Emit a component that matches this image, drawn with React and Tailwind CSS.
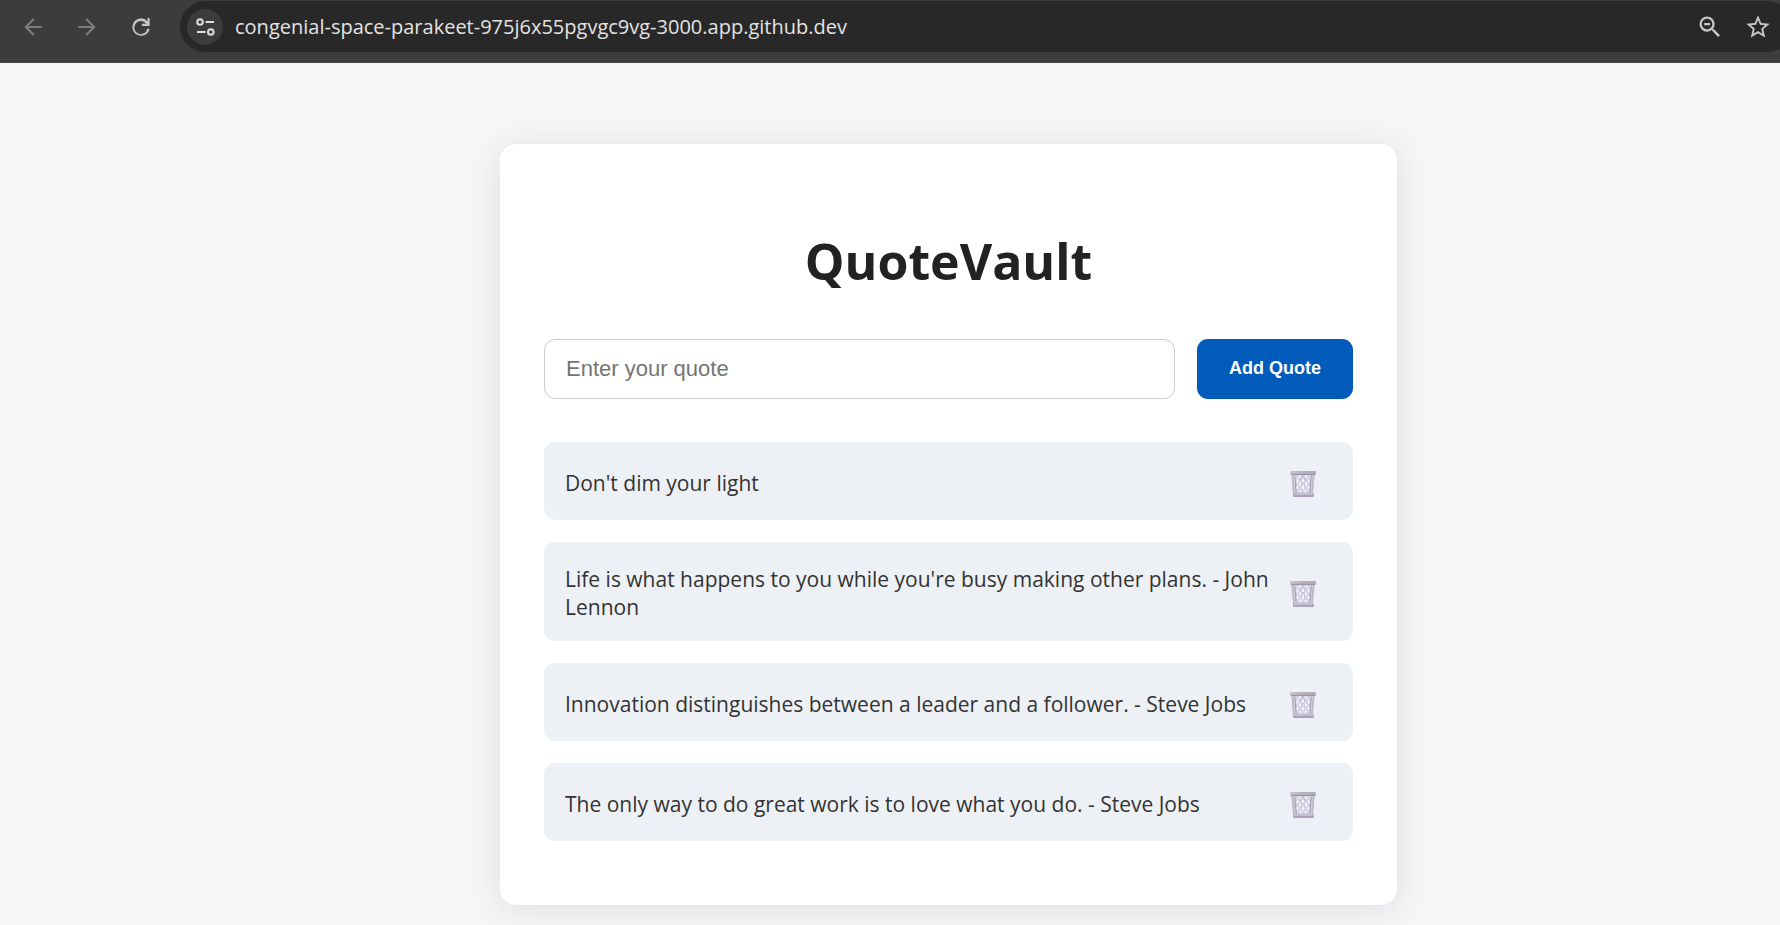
import { useId, useState } from 'react';

const initialQuotes = [
  "Don't dim your light",
  "Life is what happens to you while you're busy making other plans. - John Lennon",
  'Innovation distinguishes between a leader and a follower. - Steve Jobs',
  'The only way to do great work is to love what you do. - Steve Jobs',
];

function BackIcon() {
  return (
    <svg viewBox="0 0 24 24" className="size-[26px] fill-current" aria-hidden="true">
      <path d="M20 11H7.83l5.59-5.59L12 4l-8 8 8 8 1.41-1.41L7.83 13H20v-2z" />
    </svg>
  );
}

function ForwardIcon() {
  return (
    <svg viewBox="0 0 24 24" className="size-[26px] fill-current" aria-hidden="true">
      <path d="M12 4l-1.41 1.41L16.17 11H4v2h12.17l-5.58 5.59L12 20l8-8z" />
    </svg>
  );
}

function ReloadIcon() {
  return (
    <svg viewBox="0 0 24 24" className="size-[26px] fill-current" aria-hidden="true">
      <path d="M18 6.700V3.800h2V11h-7.200V9h3.900A6 6 0 1 0 17.800 13.500h2.100A8 8 0 1 1 18 6.700z" />
    </svg>
  );
}

function SiteSettingsIcon() {
  return (
    <svg viewBox="0 0 20 18" className="h-[18px] w-5 fill-none stroke-current stroke-2" aria-hidden="true">
      <circle cx="5" cy="4" r="2.8" />
      <path d="M10.5 4H19M2 14h8.500" />
      <circle cx="15.800" cy="14" r="2.800" />
    </svg>
  );
}

function ZoomOutIcon() {
  return (
    <svg viewBox="0 0 24 24" className="size-[28px] fill-current" aria-hidden="true">
      <path d="M15.500 14h-.79l-.28-.27A6.47 6.47 0 0 0 16 9.500 6.500 6.500 0 1 0 9.500 16c1.610 0 3.090-.59 4.230-1.570l.27.28v.79l5 4.990L20.490 19l-4.990-5zm-6 0C7.010 14 5 11.990 5 9.500S7.010 5 9.500 5 14 7.010 14 9.500 11.990 14 9.500 14zM7 8.600h5v1.800H7z" />
    </svg>
  );
}

function StarIcon() {
  return (
    <svg viewBox="0 0 24 24" className="size-[28px] fill-current" aria-hidden="true">
      <path d="M22 9.240l-7.190-.62L12 2 9.190 8.630 2 9.240l5.460 4.730L5.820 21 12 17.270 18.180 21l-1.630-7.030L22 9.240zM12 15.400l-3.760 2.270 1-4.280-3.320-2.880 4.380-.38L12 6.100l1.710 4.040 4.380.38-3.320 2.880 1 4.280L12 15.400z" />
    </svg>
  );
}

function TrashIcon() {
  const id = useId();
  return (
    <svg viewBox="0 0 26 26" className="size-[26px]" aria-hidden="true">
      <defs>
        <linearGradient id={id} x1="0" x2="1" y1="0" y2="0">
          <stop offset="0" stopColor="#c6c5ca" />
          <stop offset="0.5" stopColor="#b6b3bd" />
          <stop offset="1" stopColor="#b0acb9" />
        </linearGradient>
      </defs>
      <path d="M1.500 3h23l-1.700 20H3.200z" fill="#dad8e6" />
      <path
        d="M7 4l13 15M12 4l9 11M5.500 8l12.500 14.500M6 14l7 8.500M19 4 6 19M14 4 5.500 14M20.500 8 8 22.500M20 14l-7 8.500"
        fill="none"
        stroke="#c0bbd2"
        strokeWidth="1"
      />
      <path
        d="M9.500 4.800v2M16.500 4.800v2M7.500 8.500v3M13 8v3M18.500 8.500v3M10 11.500v3M16 11.500v3M7.500 15v3M13 15v3M18.500 15v3M10.500 18.500v2.500M15.500 18.500v2.500"
        fill="none"
        stroke="#fbfbff"
        strokeWidth="1.700"
      />
      <path d="M2.300 3.500 4 23M23.700 3.500 22 23" stroke="#bebac8" strokeWidth="1.900" />
      <path d="M4.700 4.500 6.200 22M21.300 4.500 19.800 22" stroke="#9f98ae" strokeWidth="1" />
      <rect x="0" y="0" width="26" height="3.800" rx="1" fill={`url(#${id})`} />
      <path d="M1 3.400h24" stroke="#928b9f" strokeWidth="0.900" />
      <rect x="3" y="22" width="21" height="4" rx="1.200" fill="#aaa1c0" />
      <path d="M4 23h19" stroke="#cfced4" strokeWidth="1.400" />
    </svg>
  );
}

function BrowserBar() {
  return (
    <header className="flex h-[63px] items-start border-b border-[#4a4545] bg-[#3c3c3c] pt-px pl-5 text-[#c7c7c7]">
      <nav className="flex h-[51px] items-center gap-7 pr-[26px]" aria-label="Browser">
        <button type="button" aria-label="Back" className="text-[#7d7d7d]"><BackIcon /></button>
        <button type="button" aria-label="Forward" className="text-[#7d7d7d]"><ForwardIcon /></button>
        <button type="button" aria-label="Reload"><ReloadIcon /></button>
      </nav>
      <div className="-mr-3 flex h-[51px] min-w-0 flex-1 items-center rounded-full bg-[#282828] pr-5 pl-[7px]">
        <button
          type="button"
          aria-label="Site information"
          className="flex size-9 shrink-0 items-center justify-center rounded-full bg-[#3c3c3c] text-[#dedede]"
        >
          <SiteSettingsIcon />
        </button>
        <input
          type="text"
          aria-label="Address"
          defaultValue="congenial-space-parakeet-975j6x55pgvgc9vg-3000.app.github.dev"
          className="ml-3 min-w-0 flex-1 bg-transparent text-[20px] text-[#e3e3e3] outline-none"
        />
        <div className="flex items-center gap-5">
          <button type="button" aria-label="Zoom"><ZoomOutIcon /></button>
          <button type="button" aria-label="Bookmark this page"><StarIcon /></button>
        </div>
      </div>
    </header>
  );
}

export default function App() {
  const [quotes, setQuotes] = useState(initialQuotes);
  const [draft, setDraft] = useState('');

  function addQuote(event) {
    event.preventDefault();
    if (!draft.trim()) return;
    setQuotes([...quotes, draft.trim()]);
    setDraft('');
  }

  return (
    <div className="flex min-h-screen flex-col bg-[#f4f6f8] font-['Open_Sans',sans-serif]">
      <BrowserBar />
      <main className="flex-1 pt-[81px] pb-5 pl-[117px]">
        <section className="mx-auto max-w-[897px] rounded-2xl bg-white px-11 pt-[81px] pb-16 shadow-[0_4px_33px_rgba(0,0,0,0.1)]">
          <h1 className="text-center text-[50px] leading-[72px] font-bold text-[#222]">QuoteVault</h1>
          <form onSubmit={addQuote} className="mt-[42px] flex gap-[22px]">
            <input
              type="text"
              aria-label="Quote"
              placeholder="Enter your quote"
              value={draft}
              onChange={(event) => setDraft(event.target.value)}
              className="h-[60px] min-w-0 flex-1 rounded-[11px] border border-[#ccc] px-[21px] font-['Liberation_Sans',sans-serif] text-[22px] text-[#222] placeholder:text-[#757575]"
            />
            <button
              type="submit"
              className="h-[60px] w-[156px] rounded-[11px] bg-[#005bbb] pb-0.5 font-['Liberation_Sans',sans-serif] text-[18px] font-bold text-white"
            >
              Add Quote
            </button>
          </form>
          <ul className="mt-[43px] flex flex-col gap-[22px]">
            {quotes.map((quote, index) => (
              <li
                key={quote}
                className="flex items-center justify-between gap-4 rounded-[11px] bg-[#edf1f6] pt-[23px] pr-[37px] pb-5 pl-[21px] text-[21px] leading-7 text-[#333]"
              >
                <span>{quote}</span>
                <button
                  type="button"
                  aria-label={`Delete quote: ${quote}`}
                  onClick={() => setQuotes(quotes.filter((_, i) => i !== index))}
                  className="flex h-[35px] shrink-0 items-center pt-0.5"
                >
                  <TrashIcon />
                </button>
              </li>
            ))}
          </ul>
        </section>
      </main>
    </div>
  );
}
